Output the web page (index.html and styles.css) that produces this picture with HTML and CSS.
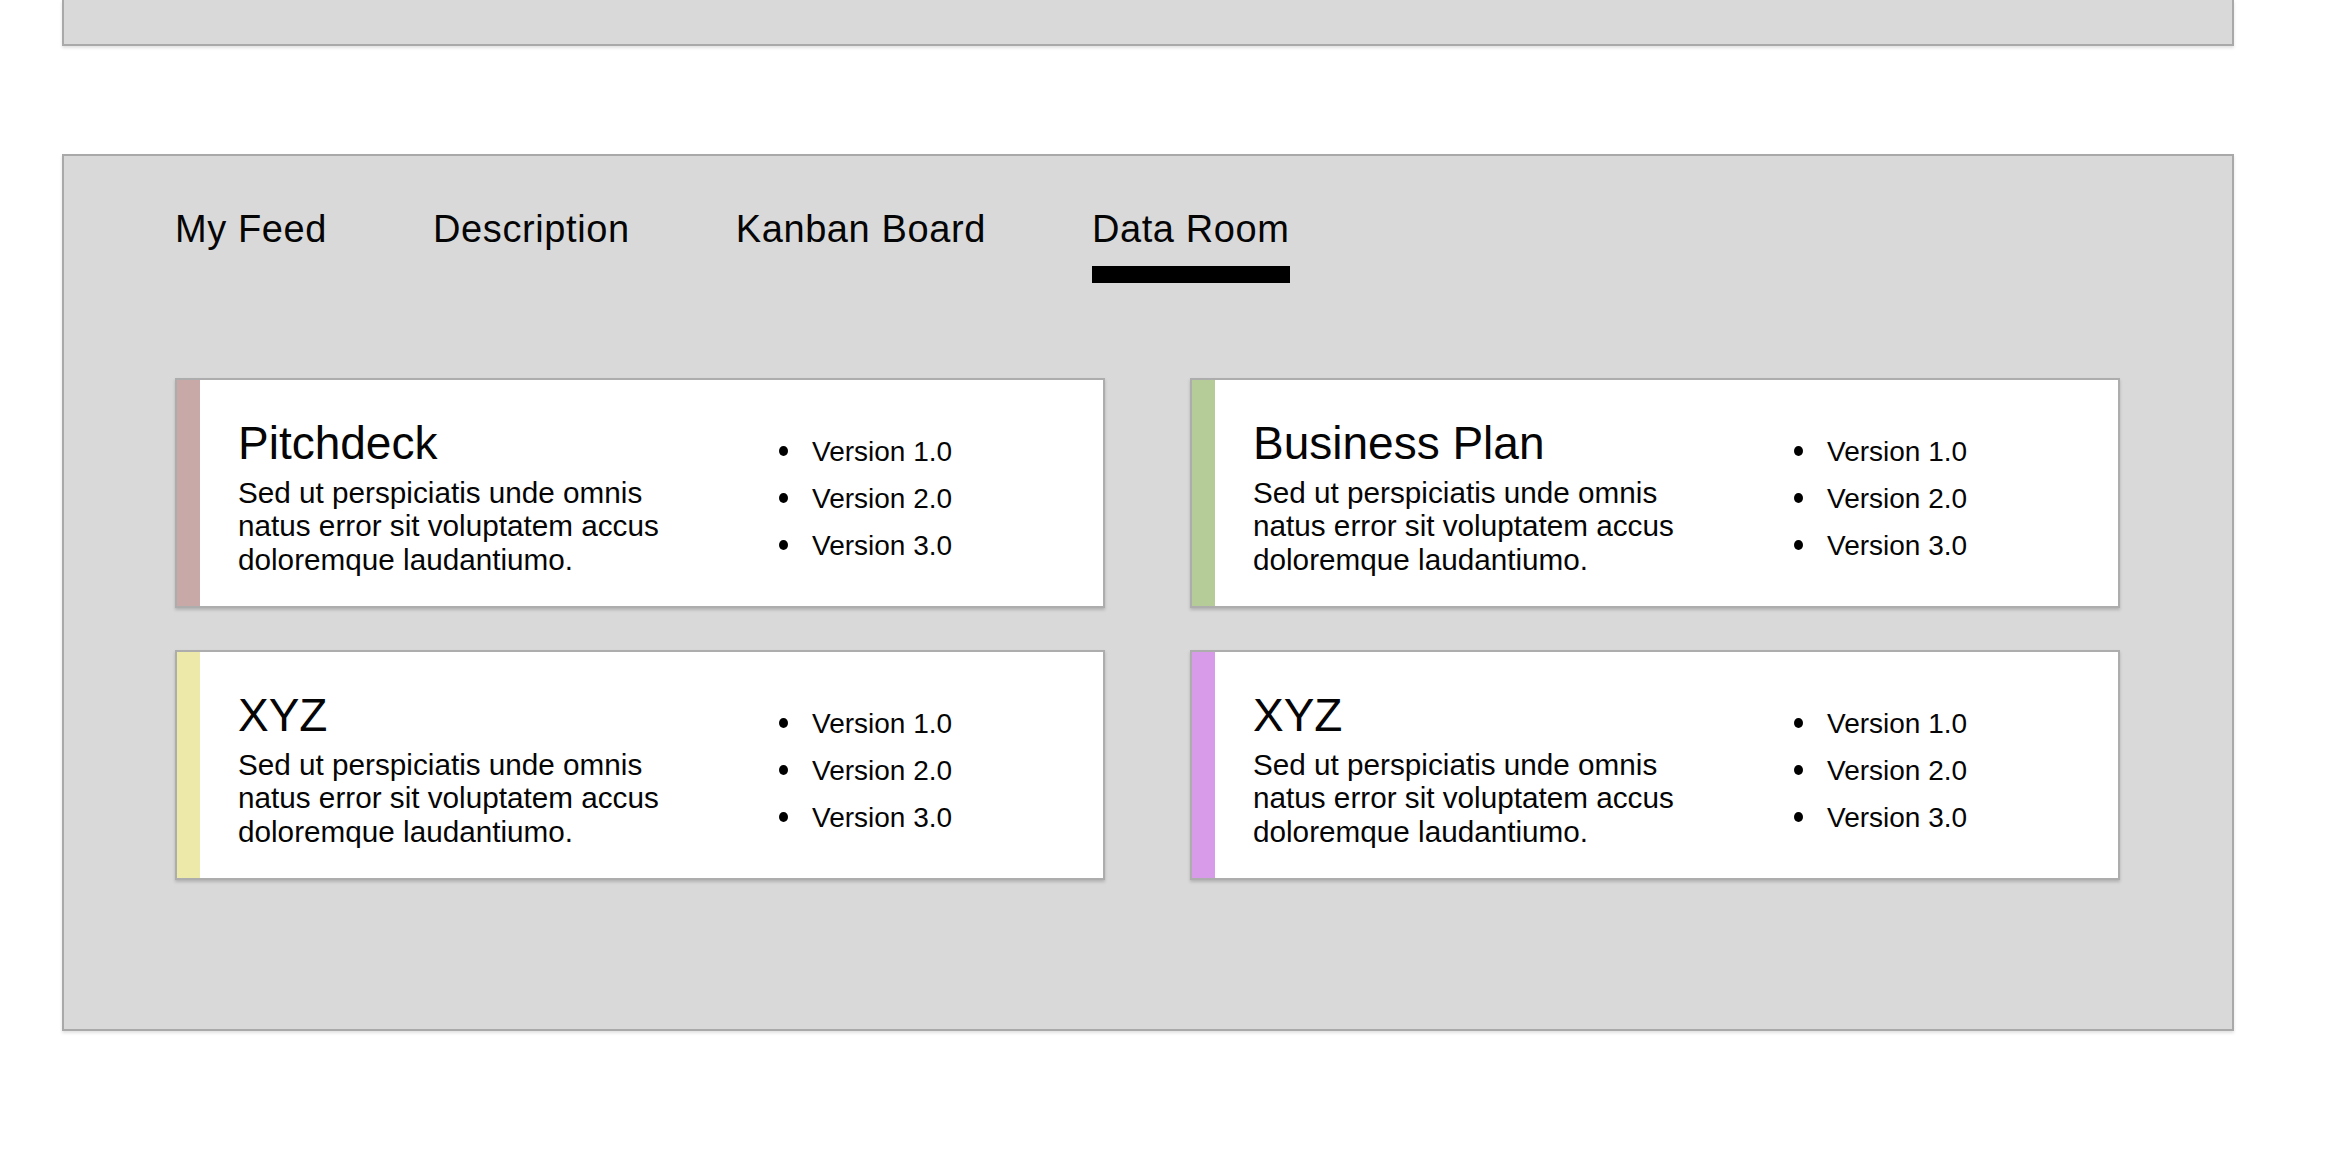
FILE: index.html
```html
<!DOCTYPE html>
<html lang="en">
<head>
<meta charset="utf-8">
<title>Data Room</title>
<link rel="stylesheet" href="styles.css">
</head>
<body>
<div class="page">
  <div class="panel panel-top"></div>

  <section class="panel panel-main">
    <nav class="tabs">
      <div class="tab">My Feed</div>
      <div class="tab">Description</div>
      <div class="tab">Kanban Board</div>
      <div class="tab active">Data Room</div>
    </nav>

    <div class="cards">
      <article class="card">
        <div class="strip strip-rose"></div>
        <div class="card-body">
          <div class="card-text">
            <h2 class="card-title">Pitchdeck</h2>
            <p class="card-desc">Sed ut perspiciatis unde omnis<br>natus error sit voluptatem accus<br>doloremque laudantiumo.</p>
          </div>
          <ul class="versions">
            <li>Version 1.0</li>
            <li>Version 2.0</li>
            <li>Version 3.0</li>
          </ul>
        </div>
      </article>

      <article class="card">
        <div class="strip strip-green"></div>
        <div class="card-body">
          <div class="card-text">
            <h2 class="card-title">Business Plan</h2>
            <p class="card-desc">Sed ut perspiciatis unde omnis<br>natus error sit voluptatem accus<br>doloremque laudantiumo.</p>
          </div>
          <ul class="versions">
            <li>Version 1.0</li>
            <li>Version 2.0</li>
            <li>Version 3.0</li>
          </ul>
        </div>
      </article>

      <article class="card">
        <div class="strip strip-yellow"></div>
        <div class="card-body">
          <div class="card-text">
            <h2 class="card-title">XYZ</h2>
            <p class="card-desc">Sed ut perspiciatis unde omnis<br>natus error sit voluptatem accus<br>doloremque laudantiumo.</p>
          </div>
          <ul class="versions">
            <li>Version 1.0</li>
            <li>Version 2.0</li>
            <li>Version 3.0</li>
          </ul>
        </div>
      </article>

      <article class="card">
        <div class="strip strip-violet"></div>
        <div class="card-body">
          <div class="card-text">
            <h2 class="card-title">XYZ</h2>
            <p class="card-desc">Sed ut perspiciatis unde omnis<br>natus error sit voluptatem accus<br>doloremque laudantiumo.</p>
          </div>
          <ul class="versions">
            <li>Version 1.0</li>
            <li>Version 2.0</li>
            <li>Version 3.0</li>
          </ul>
        </div>
      </article>
    </div>
  </section>
</div>
</body>
</html>
```

FILE: styles.css
```css
* {
  box-sizing: border-box;
}

html, body {
  margin: 0;
  padding: 0;
  background: #ffffff;
}

body {
  font-family: "Liberation Sans", Arial, Helvetica, sans-serif;
  color: #050505;
}

.page {
  width: 2344px;
  height: 1172px;
  padding: 0 110px 0 62px;
  overflow: hidden;
}

.panel {
  background: #d9d9d9;
  border: 2px solid #a9a9a9;
  box-shadow: 0 2px 3px rgba(0, 0, 0, 0.12);
}

.panel-top {
  height: 46px;
  border-top: none;
}

.panel-main {
  margin-top: 108px;
  height: 877px;
  padding: 50px 112px 0 111px;
}

.tabs {
  display: flex;
  align-items: flex-start;
  gap: 106px;
}

.tab {
  display: flex;
  flex-direction: column;
  gap: 14px;
  font-size: 38px;
  line-height: 46px;
  letter-spacing: 0.6px;
  white-space: nowrap;
}

.tab.active::after {
  content: "";
  display: block;
  height: 17px;
  background: #000;
}

.cards {
  margin-top: 95px;
  display: grid;
  grid-template-columns: 930px 930px;
  grid-auto-rows: 230px;
  column-gap: 85px;
  row-gap: 42px;
}

.card {
  display: flex;
  background: #ffffff;
  border: 2px solid #adadad;
  box-shadow: 0 2px 3px rgba(0, 0, 0, 0.18);
}

.strip {
  width: 23px;
  flex: 0 0 23px;
}

.strip-rose { background: #c9a9a8; }
.strip-green { background: #b6cc98; }
.strip-yellow { background: #ece9a9; }
.strip-violet { background: #d89be9; }

.card-body {
  flex: 1;
  display: flex;
  align-items: center;
  padding-left: 38px;
  padding-top: 10px;
}

.card-text {
  flex: 0 0 541px;
}

.card-title {
  margin: 0 0 10px 0;
  font-weight: 400;
  font-size: 46px;
  line-height: 46px;
}

.card-desc {
  margin: 0;
  font-size: 29.7px;
  line-height: 33.5px;
}

.versions {
  list-style: none;
  margin: 0;
  padding: 0;
  font-size: 28px;
  line-height: 47px;
}

.versions li {
  display: flex;
  align-items: center;
  gap: 24px;
  white-space: nowrap;
}

.versions li::before {
  content: "";
  width: 9px;
  height: 10px;
  border-radius: 50%;
  background: #000;
  flex: 0 0 9px;
}
```
